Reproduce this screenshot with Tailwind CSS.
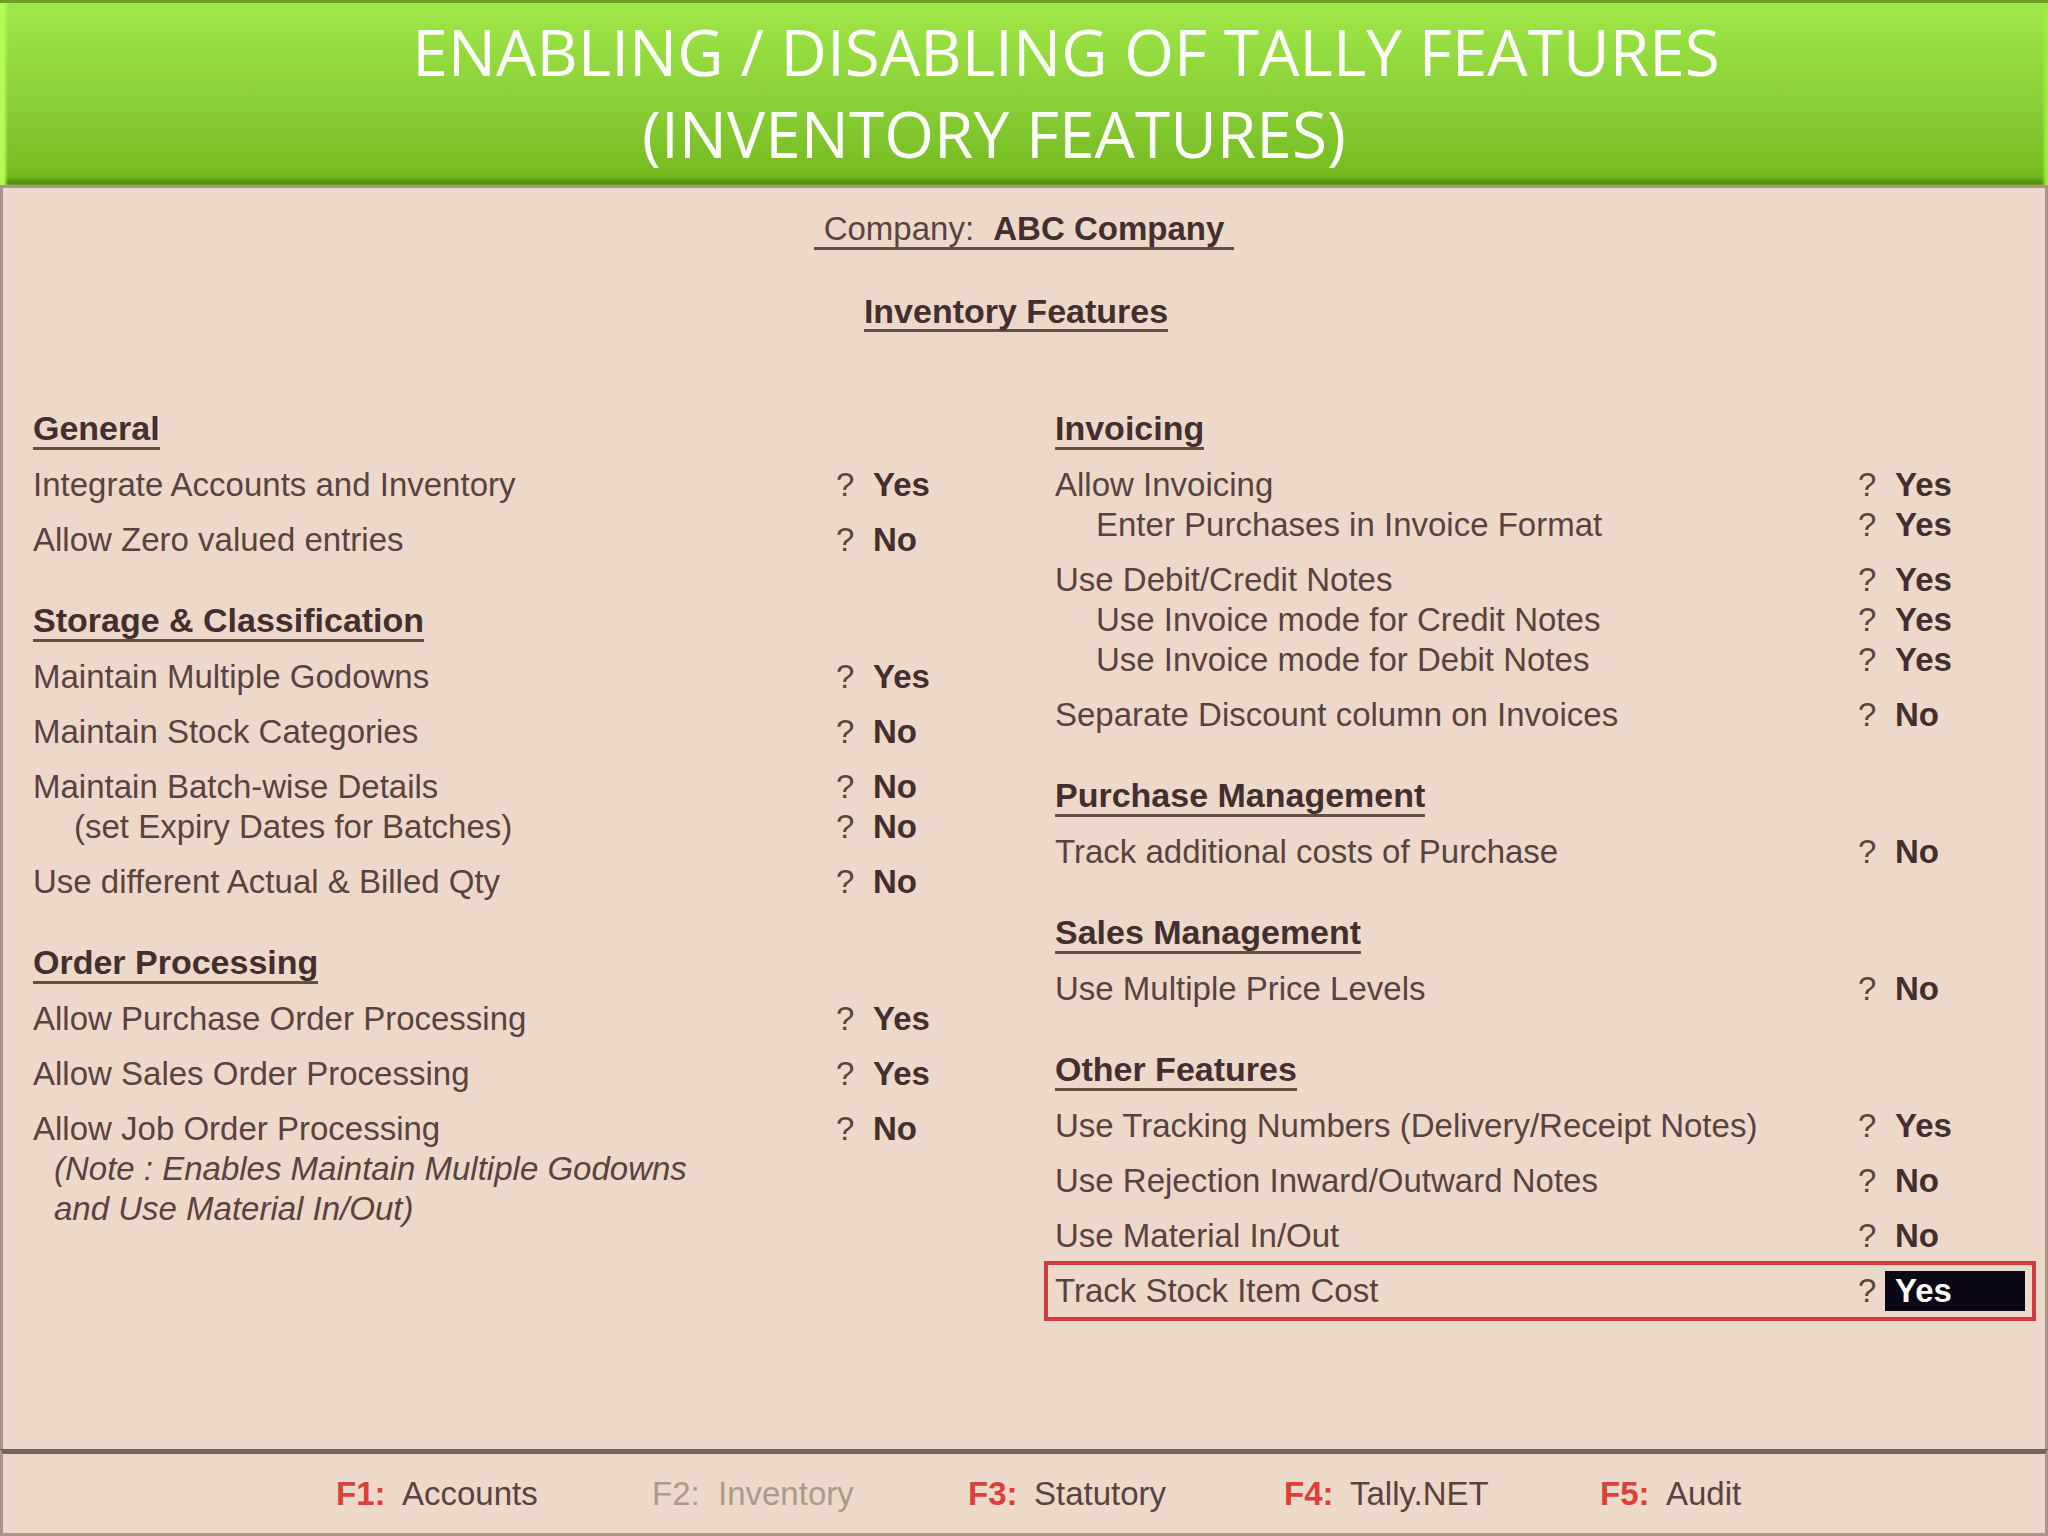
<!DOCTYPE html>
<html lang="en">

<head>
    <meta charset="UTF-8">
    <meta name="viewport" content="width=device-width, initial-scale=1.0">
    <title>Inventory Features - ABC Company</title>
    <script src="https://cdn.jsdelivr.net/npm/@tailwindcss/browser@4"></script>
</head>

<body class="min-h-screen flex flex-col bg-[#edd9ca] text-[#59433f] text-[33px] leading-10 font-['Liberation_Sans',Arial,sans-serif]">
    <!-- Banner -->
    <header class="border-t-3 border-[#6f9c2e] bg-linear-to-b from-[#a0e848] via-[#8bd138] to-[#73b81b] shadow-[inset_7px_0_3px_-1px_#b4fb55,inset_-5px_0_3px_-1px_#9bf03c,inset_0_-7px_5px_-2px_#4c8613] pt-2 pb-[10px]">
        <h1 class="text-center text-white text-[64px] leading-[82px] font-medium font-['Open_Sans','Noto_Sans',sans-serif]">
            <span class="block pl-[84px]">ENABLING / DISABLING OF TALLY FEATURES</span>
            <span class="block pr-[60px]">(INVENTORY FEATURES)</span>
        </h1>
    </header>

    <!-- Features panel -->
    <main class="grow border-3 border-b-0 border-[#a8968a] pt-[21px] pb-10">
        <div class="flex flex-col items-center gap-[41px]">
            <p class="h-[41px] border-b-3 border-[#665046] px-[10px]">Company: <b class="pl-[10px] text-[#432f2d]">ABC Company</b></p>
            <h2 class="h-[41px] border-b-3 border-[#665046] text-[34px] font-bold text-[#432f2d] mr-4">Inventory Features</h2>
        </div>
        <form class="mt-[77px] grid grid-cols-2 gap-x-[52px] pl-[30px] pr-[20px]">
            <div id="left-column" class="flex flex-col gap-[41px]"></div>
            <div id="right-column" class="flex flex-col gap-[41px]"></div>
        </form>
    </main>

    <!-- Function keys -->
    <nav class="border-3 border-t-5 border-[#a8968a] border-t-[#75665a] pt-[20px] pb-[19px] pl-[333px] pr-[129px] grid grid-cols-5">
        <button class="flex text-left"><b class="w-[66px] text-[#dc4038]">F1:</b>Accounts</button>
        <button class="flex text-left text-[#a89a8c]" disabled><span class="w-[66px]">F2:</span>Inventory</button>
        <button class="flex text-left"><b class="w-[66px] text-[#dc4038]">F3:</b>Statutory</button>
        <button class="flex text-left"><b class="w-[66px] text-[#dc4038]">F4:</b>Tally.NET</button>
        <button class="flex text-left"><b class="w-[66px] text-[#dc4038]">F5:</b>Audit</button>
    </nav>

    <script>
        // each item is a list of lines: [label, value]; lines after the first are indented
        const left = [
            { title: 'General', items: [
                [['Integrate Accounts and Inventory', 'Yes']],
                [['Allow Zero valued entries', 'No']],
            ] },
            { title: 'Storage & Classification', items: [
                [['Maintain Multiple Godowns', 'Yes']],
                [['Maintain Stock Categories', 'No']],
                [['Maintain Batch-wise Details', 'No'], ['(set Expiry Dates for Batches)', 'No']],
                [['Use different Actual & Billed Qty', 'No']],
            ] },
            { title: 'Order Processing', note: '(Note : Enables Maintain Multiple Godowns<br>and Use Material In/Out)', items: [
                [['Allow Purchase Order Processing', 'Yes']],
                [['Allow Sales Order Processing', 'Yes']],
                [['Allow Job Order Processing', 'No']],
            ] },
        ];
        const right = [
            { title: 'Invoicing', items: [
                [['Allow Invoicing', 'Yes'], ['Enter Purchases in Invoice Format', 'Yes']],
                [['Use Debit/Credit Notes', 'Yes'], ['Use Invoice mode for Credit Notes', 'Yes'], ['Use Invoice mode for Debit Notes', 'Yes']],
                [['Separate Discount column on Invoices', 'No']],
            ] },
            { title: 'Purchase Management', items: [
                [['Track additional costs of Purchase', 'No']],
            ] },
            { title: 'Sales Management', items: [
                [['Use Multiple Price Levels', 'No']],
            ] },
            { title: 'Other Features', items: [
                [['Use Tracking Numbers (Delivery/Receipt Notes)', 'Yes']],
                [['Use Rejection Inward/Outward Notes', 'No']],
                [['Use Material In/Out', 'No']],
                [['Track Stock Item Cost', 'Yes', true]],
            ] },
        ];

        let nextId = 0;

        function renderLine([label, value, active], index) {
            const id = 'feature-' + nextId++;
            return `
                <div class="flex ${active ? '-mx-[11px] -my-[10px] border-4 border-[#d33a40] px-[7px] py-[6px]' : ''}">
                    <label for="${id}" class="grow ${index ? 'pl-[41px]' : ''}">${label.replace('&', '&amp;')}</label>
                    <span class="w-[27px]">?</span>
                    <input id="${id}" value="${value}" class="w-[140px] h-10 pl-[10px] font-bold outline-none ${active ? 'bg-[#0b0716] text-white' : 'text-[#432f2d]'}">
                </div>`;
        }

        function renderColumn(id, sections) {
            document.getElementById(id).innerHTML = sections.map(section => `
                <section class="flex flex-col gap-[15px]">
                    <h3 class="self-start h-[41px] border-b-3 border-[#665046] text-[34px] leading-[38px] font-bold text-[#432f2d]">${section.title.replace('&', '&amp;')}</h3>
                    ${section.items.map(lines => `<div>${lines.map(renderLine).join('')}</div>`).join('')}
                    ${section.note ? `<p class="-mt-[15px] pl-[21px] italic">${section.note}</p>` : ''}
                </section>`).join('');
        }

        renderColumn('left-column', left);
        renderColumn('right-column', right);
    </script>
</body>

</html>
